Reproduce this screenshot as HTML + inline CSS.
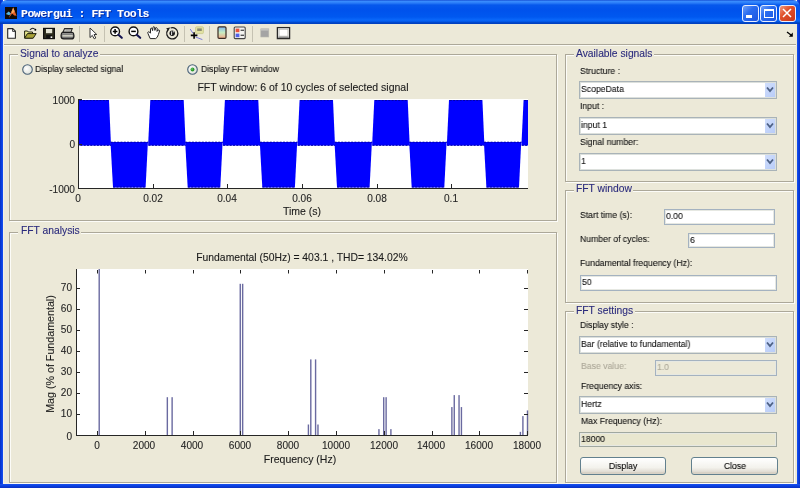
<!DOCTYPE html><html><head><meta charset="utf-8"><style>
*{margin:0;padding:0}
html,body{width:800px;height:488px;overflow:hidden;background:#fff;}
body{position:relative;font-family:"Liberation Sans",sans-serif;}
.t{position:absolute;white-space:nowrap;line-height:1;will-change:transform;-webkit-text-stroke:0.1px currentColor;}
</style></head><body>
<div style="position:absolute;left:0px;top:0px;width:800px;height:488px;background:#ECE9D8;border-radius:7px 7px 0 0;"></div>
<div style="position:absolute;left:0px;top:0px;width:3px;height:488px;background:linear-gradient(to right,#0A2FC0,#0840E0 50%,#1A50F0);"></div>
<div style="position:absolute;left:3px;top:24px;width:1px;height:460px;background:#F2F0E6;"></div>
<div style="position:absolute;left:797px;top:0px;width:3px;height:488px;background:linear-gradient(to left,#0A2FC0,#0840E0 50%,#1A50F0);"></div>
<div style="position:absolute;left:0px;top:484px;width:800px;height:4px;background:linear-gradient(to top,#0A2FC0,#0840E0 50%,#1A50F0);"></div>
<div style="position:absolute;left:3px;top:483px;width:794px;height:1px;background:#F2F0E6;"></div>
<div style="position:absolute;left:0px;top:0px;width:800px;height:24px;border-radius:7px 7px 0 0;background:linear-gradient(to bottom,#0A3CC8 0px,#3D90FF 1px,#2A7CF8 3px,#0658EC 5px,#0052EC 10px,#0058F0 17px,#0A68FA 20px,#0052E0 22px,#003CB8 23px,#003CB8 24px);"></div>
<div style="position:absolute;left:4px;top:23px;width:792px;height:1px;background:#0040C0;"></div>
<div class="t" style="left:21.00px;top:7.86px;font-size:11.5px;color:#fff;font-weight:bold;font-family:'Liberation Mono',monospace;letter-spacing:-0.5px;text-shadow:1px 1px 0 #0A2A9C;">Powergui : FFT Tools</div>
<svg style="position:absolute;left:5px;top:7px" width="12" height="12" viewBox="0 0 12 12">
<rect width="12" height="12" fill="#120C08"/>
<path d="M0.8 7 L3.6 4.6 L6.2 6.4 L4.2 8.2 Z" fill="#58B4DC"/>
<path d="M3.8 11 L8.2 0.6 L11.6 8.8 L9.2 8.6 L7.2 6.4 Z" fill="#E4602A"/>
<path d="M8.2 0.6 L9.6 4.2 L7.6 6.6 L6.4 5.2 Z" fill="#F6A860"/>
</svg>
<div style="position:absolute;left:742px;top:5px;width:17px;height:17px;background:linear-gradient(135deg,#6FA0F8,#2A6CF0 40%,#1D55E0);border:1px solid #E8EEFF;border-radius:3px;box-sizing:border-box;"></div>
<div style="position:absolute;left:746px;top:15px;width:6px;height:3px;background:#fff;"></div>
<div style="position:absolute;left:760px;top:5px;width:17px;height:17px;background:linear-gradient(135deg,#6FA0F8,#2A6CF0 40%,#1D55E0);border:1px solid #E8EEFF;border-radius:3px;box-sizing:border-box;"></div>
<div style="position:absolute;left:763.5px;top:8.5px;width:10px;height:9.5px;border:1px solid #fff;border-top-width:2.5px;box-sizing:border-box;"></div>
<div style="position:absolute;left:779px;top:5px;width:17px;height:17px;background:linear-gradient(135deg,#F09A80,#E0502A 40%,#C8361A);border:1px solid #E8EEFF;border-radius:3px;box-sizing:border-box;"></div>
<svg style="position:absolute;left:779px;top:5px" width="17" height="17"><path d="M4 4 L12 12 M12 4 L4 12" stroke="#fff" stroke-width="1.5"/></svg>
<div style="position:absolute;left:4px;top:44px;width:792px;height:1px;background:#ACA899;"></div>
<div style="position:absolute;left:4px;top:45px;width:792px;height:1px;background:#FAFAF4;"></div>
<svg style="position:absolute;left:0;top:24px" width="300" height="20" viewBox="0 24 300 20">
<defs><linearGradient id="cb" x1="0" y1="0" x2="0" y2="1"><stop offset="0" stop-color="#7FB8F0"/><stop offset="0.5" stop-color="#C8ECC0"/><stop offset="1" stop-color="#F4A888"/></linearGradient></defs>
<!-- new -->
<path d="M7.7 28.6 H12.8 L15.4 31.2 V38.2 H7.7 Z" fill="#fff" stroke="#262626" stroke-width="1.1" stroke-linejoin="round"/>
<path d="M12.6 28.8 V31.4 H15.2" fill="none" stroke="#262626" stroke-width="0.9"/>
<!-- open -->
<path d="M24.6 31 H27.5 L28.3 32 H32.5 V38 H24.6 Z" fill="#ECEC90" stroke="#202010" stroke-width="1"/>
<path d="M24.6 38.2 L27.4 33.6 H36.2 L33.2 38.2 Z" fill="#A8A238" stroke="#202010" stroke-width="1"/>
<path d="M30 30 Q32 27.2 34.5 28.8" fill="none" stroke="#222" stroke-width="1.1"/>
<circle cx="35.3" cy="29.8" r="1" fill="#000"/>
<!-- save -->
<rect x="43.6" y="28.4" width="10.8" height="10.2" fill="#2E2E1E" stroke="#111" stroke-width="1.2"/>
<rect x="46" y="29" width="6.2" height="4.2" fill="#E4E4D4"/>
<rect x="46.2" y="35" width="5.5" height="3" fill="#111"/>
<rect x="50.6" y="36.4" width="1.6" height="1.6" fill="#fff"/>
<!-- print -->
<path d="M64.6 28.6 H72.2 L70.8 32.4 H62.8 Z" fill="#D8D8D0" stroke="#2A2A2A" stroke-width="1.1"/>
<path d="M65.5 30 H70.5" stroke="#777" stroke-width="0.8"/>
<path d="M62.6 32.4 H72 Q73.9 32.8 73.9 35.2 V36.6 Q73.7 38.9 71.4 38.9 H63.8 Q61.1 38.9 61.1 36.6 V35 Q61.3 32.8 62.6 32.4 Z" fill="#707070" stroke="#1E1E1E" stroke-width="1.2"/>
<rect x="62.4" y="35.1" width="10.4" height="1.5" fill="#D8D8C8"/>
<rect x="62.4" y="33.2" width="10.4" height="1.2" fill="#9A9A96"/>
<!-- separators -->
<rect x="79" y="26" width="1" height="16" fill="#C5C2B2"/>
<rect x="104" y="26" width="1" height="16" fill="#C5C2B2"/>
<rect x="184" y="26" width="1" height="16" fill="#C5C2B2"/>
<rect x="209" y="26" width="1" height="16" fill="#C5C2B2"/>
<rect x="252" y="26" width="1" height="16" fill="#C5C2B2"/>
<!-- arrow -->
<path d="M90 28 V37.6 L92.3 35.4 L94.2 38.8 L95.8 38 L94 34.6 L96.8 34.5 Z" fill="#fff" stroke="#333" stroke-width="1" stroke-linejoin="round"/>
<!-- zoom in -->
<circle cx="115.1" cy="31.4" r="4.4" fill="#fff" stroke="#111" stroke-width="1.4"/>
<path d="M112.8 31.4 H117.4 M115.1 29.1 V33.7" stroke="#000" stroke-width="1.5"/>
<path d="M118.4 34.8 L121.8 37.8" stroke="#141450" stroke-width="2.1" stroke-linecap="round"/>
<!-- zoom out -->
<circle cx="133.5" cy="31.4" r="4.4" fill="#fff" stroke="#111" stroke-width="1.4"/>
<path d="M131.2 31.4 H135.8" stroke="#000" stroke-width="1.5"/>
<path d="M136.8 34.8 L140.2 37.8" stroke="#141450" stroke-width="2.1" stroke-linecap="round"/>
<!-- hand -->
<path d="M150.2 38.6 L148 33.6 Q147.2 32 148.6 31.8 Q149.6 31.8 150.4 33.2 L150.6 28.8 Q151 27.6 152 28.2 L152.6 30.6 L153 27.2 Q153.8 26.2 154.6 27.2 L154.9 30.4 L155.6 27.8 Q156.6 27.2 157.2 28.2 L157 31.4 L158 30 Q159.4 29.6 159.6 30.8 L158.4 34.6 Q157.4 38 155.6 38.6 Z" fill="#fff" stroke="#222" stroke-width="1"/>
<!-- rotate -->
<path d="M167.8 30 A5.6 5.6 0 1 0 170.6 28" fill="none" stroke="#1a1a1a" stroke-width="1.3"/>
<path d="M166.2 28.2 L170.2 27.4 L168.2 31 Z" fill="#1a1a1a"/>
<circle cx="172.2" cy="33.2" r="2.7" fill="#1a1a1a"/>
<path d="M171.6 31.4 V35 M172.8 31.8 H174" stroke="#fff" stroke-width="0.9"/>
<!-- data cursor -->
<rect x="195.6" y="26.8" width="7.8" height="6.8" rx="1" fill="#E2E2A4" stroke="#C8C888" stroke-width="0.8"/>
<rect x="197.2" y="28.4" width="4.6" height="2.6" fill="#8A8A70"/>
<path d="M190.2 29 L193 33.4 M195.6 37 L202.4 39.6" fill="none" stroke="#7A7ADA" stroke-width="1"/>
<path d="M190.8 35.4 H197.4 M194.1 32.2 V38.8" stroke="#000" stroke-width="1.6"/>
<!-- colorbar -->
<rect x="218" y="26.8" width="8" height="11.6" rx="1.2" fill="url(#cb)" stroke="#3A2A22" stroke-width="1.2"/>
<!-- legend -->
<rect x="234.2" y="27" width="11" height="11.6" rx="1" fill="#F4F4F0" stroke="#444" stroke-width="1.1"/>
<rect x="235.6" y="28.6" width="3.8" height="3.6" fill="#E8503C"/>
<rect x="235.6" y="33.6" width="3.8" height="3.6" fill="#5060E8"/>
<rect x="240.6" y="29.6" width="3.4" height="1.4" fill="#555"/>
<rect x="240.6" y="34.6" width="3.4" height="1.4" fill="#555"/>
<!-- gray square -->
<rect x="260.8" y="28.8" width="8" height="8.2" fill="#A4A4A4" stroke="#B8B8B0" stroke-width="0.6"/>
<rect x="261" y="29" width="7.6" height="1.6" fill="#C4C4C0"/>
<!-- window -->
<rect x="277.4" y="27.6" width="12.2" height="11" fill="#fff" stroke="#2A2A2A" stroke-width="1.3"/>
<rect x="279" y="29.2" width="9" height="7" fill="#fff" stroke="#B0B0A8" stroke-width="0.8"/>
<rect x="278.2" y="36.6" width="10.6" height="1.4" fill="#888"/>
</svg>
<svg style="position:absolute;left:786px;top:31px" width="8" height="6"><path d="M1 1 L5 4" stroke="#000" stroke-width="1.3"/><path d="M6.8 1.5 L6.8 5.8 L2.8 5.8 Z" fill="#000"/></svg>
<div style="position:absolute;left:10px;top:55px;width:548px;height:167px;border:1px solid #FCFCF8;box-sizing:border-box;"></div>
<div style="position:absolute;left:9px;top:54px;width:548px;height:167px;border:1px solid #ACA899;box-sizing:border-box;"></div>
<div style="position:absolute;left:17.7px;top:48px;width:82.4453125px;height:10px;background:#ECE9D8;"></div>
<div class="t" style="left:20.20px;top:48.88px;font-size:10.3px;color:#2A2A7C;font-weight:normal;font-family:'Liberation Sans',sans-serif;">Signal to analyze</div>
<div style="position:absolute;left:10px;top:233px;width:548px;height:251px;border:1px solid #FCFCF8;box-sizing:border-box;"></div>
<div style="position:absolute;left:9px;top:232px;width:548px;height:251px;border:1px solid #ACA899;box-sizing:border-box;"></div>
<div style="position:absolute;left:18.0px;top:226px;width:62.7640625px;height:10px;background:#ECE9D8;"></div>
<div class="t" style="left:20.50px;top:226.38px;font-size:10.3px;color:#2A2A7C;font-weight:normal;font-family:'Liberation Sans',sans-serif;">FFT analysis</div>
<svg style="position:absolute;left:21.7px;top:64.2px" width="11" height="11"><defs><radialGradient id="rg21" cx="0.4" cy="0.4" r="0.7"><stop offset="0" stop-color="#fff"/><stop offset="1" stop-color="#D8DCD4"/></radialGradient></defs><circle cx="5.5" cy="5.5" r="4.8" fill="url(#rg21)" stroke="#4A6278" stroke-width="1.1"/></svg>
<div class="t" style="left:34.70px;top:63.64px;font-size:9.4px;color:#111;font-weight:normal;font-family:'Liberation Sans',sans-serif;transform:scaleX(0.925);transform-origin:0 0;">Display selected signal</div>
<svg style="position:absolute;left:187px;top:64px" width="11" height="11"><defs><radialGradient id="rg187" cx="0.4" cy="0.4" r="0.7"><stop offset="0" stop-color="#fff"/><stop offset="1" stop-color="#D8DCD4"/></radialGradient></defs><circle cx="5.5" cy="5.5" r="4.8" fill="url(#rg187)" stroke="#4A6278" stroke-width="1.1"/><circle cx="5.5" cy="5.5" r="2" fill="#2E9A2E"/><circle cx="5" cy="5" r="0.8" fill="#7ED87E"/></svg>
<div class="t" style="left:200.50px;top:63.64px;font-size:9.4px;color:#111;font-weight:normal;font-family:'Liberation Sans',sans-serif;transform:scaleX(0.925);transform-origin:0 0;">Display FFT window</div>
<div style="position:absolute;left:78px;top:99px;width:450px;height:89px;background:#fff;"></div>
<svg style="position:absolute;left:0;top:0" width="800" height="488">
<defs><clipPath id="c1"><rect x="78" y="99" width="450" height="89"/></clipPath></defs><g clip-path="url(#c1)">
<path d="M-1.3 145.5 L0.9 100 L34.3 100 L36.3 145.5 Z" fill="#0000FF"/>
<path d="M35.8 142 L38.3 187.6 L70.9 187.6 L73.2 142 Z" fill="#0000FF"/>
<path d="M1.7 100.5 H34.1 M-0.9 145.3 H36.3" stroke="#0000A8" stroke-width="1" stroke-dasharray="2 1.3"/>
<path d="M35.9 142.2 H73.7 M38.5 187 H71.1" stroke="#0000A8" stroke-width="1" stroke-dasharray="2 1.3"/>
<path d="M73.4 145.5 L75.6 100 L109.0 100 L111.0 145.5 Z" fill="#0000FF"/>
<path d="M110.5 142 L113.0 187.6 L145.6 187.6 L147.9 142 Z" fill="#0000FF"/>
<path d="M76.4 100.5 H108.8 M73.8 145.3 H111.0" stroke="#0000A8" stroke-width="1" stroke-dasharray="2 1.3"/>
<path d="M110.6 142.2 H148.4 M113.2 187 H145.8" stroke="#0000A8" stroke-width="1" stroke-dasharray="2 1.3"/>
<path d="M148.1 145.5 L150.3 100 L183.7 100 L185.7 145.5 Z" fill="#0000FF"/>
<path d="M185.2 142 L187.7 187.6 L220.3 187.6 L222.6 142 Z" fill="#0000FF"/>
<path d="M151.1 100.5 H183.5 M148.5 145.3 H185.7" stroke="#0000A8" stroke-width="1" stroke-dasharray="2 1.3"/>
<path d="M185.3 142.2 H223.1 M187.9 187 H220.5" stroke="#0000A8" stroke-width="1" stroke-dasharray="2 1.3"/>
<path d="M222.7 145.5 L224.9 100 L258.3 100 L260.3 145.5 Z" fill="#0000FF"/>
<path d="M259.8 142 L262.3 187.6 L294.9 187.6 L297.2 142 Z" fill="#0000FF"/>
<path d="M225.7 100.5 H258.1 M223.1 145.3 H260.3" stroke="#0000A8" stroke-width="1" stroke-dasharray="2 1.3"/>
<path d="M259.9 142.2 H297.7 M262.5 187 H295.1" stroke="#0000A8" stroke-width="1" stroke-dasharray="2 1.3"/>
<path d="M297.4 145.5 L299.6 100 L333.0 100 L335.0 145.5 Z" fill="#0000FF"/>
<path d="M334.5 142 L337.0 187.6 L369.6 187.6 L371.9 142 Z" fill="#0000FF"/>
<path d="M300.4 100.5 H332.8 M297.8 145.3 H335.0" stroke="#0000A8" stroke-width="1" stroke-dasharray="2 1.3"/>
<path d="M334.6 142.2 H372.4 M337.2 187 H369.8" stroke="#0000A8" stroke-width="1" stroke-dasharray="2 1.3"/>
<path d="M372.1 145.5 L374.3 100 L407.7 100 L409.7 145.5 Z" fill="#0000FF"/>
<path d="M409.2 142 L411.7 187.6 L444.3 187.6 L446.6 142 Z" fill="#0000FF"/>
<path d="M375.1 100.5 H407.5 M372.5 145.3 H409.7" stroke="#0000A8" stroke-width="1" stroke-dasharray="2 1.3"/>
<path d="M409.3 142.2 H447.1 M411.9 187 H444.5" stroke="#0000A8" stroke-width="1" stroke-dasharray="2 1.3"/>
<path d="M446.8 145.5 L449.0 100 L482.4 100 L484.4 145.5 Z" fill="#0000FF"/>
<path d="M483.9 142 L486.4 187.6 L519.0 187.6 L521.2 142 Z" fill="#0000FF"/>
<path d="M449.8 100.5 H482.2 M447.2 145.3 H484.4" stroke="#0000A8" stroke-width="1" stroke-dasharray="2 1.3"/>
<path d="M484.0 142.2 H521.8 M486.6 187 H519.1" stroke="#0000A8" stroke-width="1" stroke-dasharray="2 1.3"/>
<path d="M521.4 145.5 L523.6 100 L557.0 100 L559.0 145.5 Z" fill="#0000FF"/>
<path d="M558.5 142 L561.0 187.6 L593.6 187.6 L595.9 142 Z" fill="#0000FF"/>
<path d="M524.4 100.5 H556.8 M521.8 145.3 H559.0" stroke="#0000A8" stroke-width="1" stroke-dasharray="2 1.3"/>
<path d="M558.6 142.2 H596.4 M561.2 187 H593.8" stroke="#0000A8" stroke-width="1" stroke-dasharray="2 1.3"/>
<path d="M596.1 145.5 L598.3 100 L631.7 100 L633.7 145.5 Z" fill="#0000FF"/>
<path d="M633.2 142 L635.7 187.6 L668.3 187.6 L670.6 142 Z" fill="#0000FF"/>
<path d="M599.1 100.5 H631.5 M596.5 145.3 H633.7" stroke="#0000A8" stroke-width="1" stroke-dasharray="2 1.3"/>
<path d="M633.3 142.2 H671.1 M635.9 187 H668.5" stroke="#0000A8" stroke-width="1" stroke-dasharray="2 1.3"/>
</g>
<path d="M78.5 99 V188.5 H528" fill="none" stroke="#262626" stroke-width="1"/>
<path d="M78.5 188 v-4" stroke="#262626" stroke-width="1"/>
<path d="M153.5 188 v-4" stroke="#262626" stroke-width="1"/>
<path d="M227.5 188 v-4" stroke="#262626" stroke-width="1"/>
<path d="M302.5 188 v-4" stroke="#262626" stroke-width="1"/>
<path d="M377.5 188 v-4" stroke="#262626" stroke-width="1"/>
<path d="M451.5 188 v-4" stroke="#262626" stroke-width="1"/>
<path d="M78 99.5 h4" stroke="#262626" stroke-width="1"/>
<path d="M78 144.5 h4" stroke="#262626" stroke-width="1"/>
<path d="M78 188.5 h4" stroke="#262626" stroke-width="1"/>
</svg>
<div class="t" style="left:-225.00px;width:300px;text-align:right;top:96.05px;font-size:10.1px;color:#262626;">1000</div>
<div class="t" style="left:-225.00px;width:300px;text-align:right;top:140.05px;font-size:10.1px;color:#262626;">0</div>
<div class="t" style="left:-225.00px;width:300px;text-align:right;top:185.05px;font-size:10.1px;color:#262626;">-1000</div>
<div class="t" style="left:-221.80px;width:600px;text-align:center;top:193.65px;font-size:10.1px;color:#262626;">0</div>
<div class="t" style="left:-146.80px;width:600px;text-align:center;top:193.65px;font-size:10.1px;color:#262626;">0.02</div>
<div class="t" style="left:-72.80px;width:600px;text-align:center;top:193.65px;font-size:10.1px;color:#262626;">0.04</div>
<div class="t" style="left:2.20px;width:600px;text-align:center;top:193.65px;font-size:10.1px;color:#262626;">0.06</div>
<div class="t" style="left:77.20px;width:600px;text-align:center;top:193.65px;font-size:10.1px;color:#262626;">0.08</div>
<div class="t" style="left:151.20px;width:600px;text-align:center;top:193.65px;font-size:10.1px;color:#262626;">0.1</div>
<div class="t" style="left:3.00px;width:600px;text-align:center;top:82.31px;font-size:10.5px;color:#1a1a1a;">FFT window: 6 of 10 cycles of selected signal</div>
<div class="t" style="left:1.50px;width:600px;text-align:center;top:206.11px;font-size:10.5px;color:#1a1a1a;">Time (s)</div>
<div style="position:absolute;left:76px;top:269px;width:452px;height:166px;background:#fff;"></div>
<svg style="position:absolute;left:0;top:0" width="800" height="488">
<rect x="98.50" y="269.00" width="1.4" height="166.00" fill="#6A6AA0"/>
<rect x="166.64" y="397.20" width="1.4" height="37.80" fill="#6A6AA0"/>
<rect x="171.42" y="397.20" width="1.4" height="37.80" fill="#6A6AA0"/>
<rect x="239.56" y="283.80" width="1.4" height="151.20" fill="#6A6AA0"/>
<rect x="241.96" y="283.80" width="1.4" height="151.20" fill="#6A6AA0"/>
<rect x="307.71" y="424.50" width="1.4" height="10.50" fill="#6A6AA0"/>
<rect x="310.10" y="359.40" width="1.4" height="75.60" fill="#6A6AA0"/>
<rect x="314.88" y="359.40" width="1.4" height="75.60" fill="#6A6AA0"/>
<rect x="317.27" y="424.50" width="1.4" height="10.50" fill="#6A6AA0"/>
<rect x="378.24" y="429.12" width="1.4" height="5.88" fill="#6A6AA0"/>
<rect x="383.02" y="397.20" width="1.4" height="37.80" fill="#6A6AA0"/>
<rect x="385.42" y="397.20" width="1.4" height="37.80" fill="#6A6AA0"/>
<rect x="390.20" y="429.12" width="1.4" height="5.88" fill="#6A6AA0"/>
<rect x="451.17" y="407.07" width="1.4" height="27.93" fill="#6A6AA0"/>
<rect x="453.56" y="395.10" width="1.4" height="39.90" fill="#6A6AA0"/>
<rect x="458.34" y="395.10" width="1.4" height="39.90" fill="#6A6AA0"/>
<rect x="460.73" y="407.07" width="1.4" height="27.93" fill="#6A6AA0"/>
<rect x="519.69" y="431.85" width="1.4" height="3.15" fill="#6A6AA0"/>
<rect x="522.20" y="416.10" width="1.4" height="18.90" fill="#6A6AA0"/>
<rect x="526.80" y="410.43" width="1.4" height="24.57" fill="#6A6AA0"/>
<path d="M76.5 269 V435.5 H528" fill="none" stroke="#262626" stroke-width="1"/>
<path d="M97.5 435 v-4 M97.5 270 v3.5" stroke="#262626" stroke-width="1"/>
<path d="M145.5 435 v-4 M145.5 270 v3.5" stroke="#262626" stroke-width="1"/>
<path d="M193.5 435 v-4 M193.5 270 v3.5" stroke="#262626" stroke-width="1"/>
<path d="M240.5 435 v-4 M240.5 270 v3.5" stroke="#262626" stroke-width="1"/>
<path d="M288.5 435 v-4 M288.5 270 v3.5" stroke="#262626" stroke-width="1"/>
<path d="M336.5 435 v-4 M336.5 270 v3.5" stroke="#262626" stroke-width="1"/>
<path d="M384.5 435 v-4 M384.5 270 v3.5" stroke="#262626" stroke-width="1"/>
<path d="M432.5 435 v-4 M432.5 270 v3.5" stroke="#262626" stroke-width="1"/>
<path d="M479.5 435 v-4 M479.5 270 v3.5" stroke="#262626" stroke-width="1"/>
<path d="M527.5 435 v-4 M527.5 270 v3.5" stroke="#262626" stroke-width="1"/>
<path d="M76 435.5 h4 M528 435.5 h-4" stroke="#262626" stroke-width="1"/>
<path d="M76 414.5 h4 M528 414.5 h-4" stroke="#262626" stroke-width="1"/>
<path d="M76 393.5 h4 M528 393.5 h-4" stroke="#262626" stroke-width="1"/>
<path d="M76 372.5 h4 M528 372.5 h-4" stroke="#262626" stroke-width="1"/>
<path d="M76 351.5 h4 M528 351.5 h-4" stroke="#262626" stroke-width="1"/>
<path d="M76 330.5 h4 M528 330.5 h-4" stroke="#262626" stroke-width="1"/>
<path d="M76 309.5 h4 M528 309.5 h-4" stroke="#262626" stroke-width="1"/>
<path d="M76 288.5 h4 M528 288.5 h-4" stroke="#262626" stroke-width="1"/>
</svg>
<div class="t" style="left:-228.00px;width:300px;text-align:right;top:431.55px;font-size:10.1px;color:#262626;">0</div>
<div class="t" style="left:-228.00px;width:300px;text-align:right;top:409.05px;font-size:10.1px;color:#262626;">10</div>
<div class="t" style="left:-228.00px;width:300px;text-align:right;top:388.05px;font-size:10.1px;color:#262626;">20</div>
<div class="t" style="left:-228.00px;width:300px;text-align:right;top:367.05px;font-size:10.1px;color:#262626;">30</div>
<div class="t" style="left:-228.00px;width:300px;text-align:right;top:346.05px;font-size:10.1px;color:#262626;">40</div>
<div class="t" style="left:-228.00px;width:300px;text-align:right;top:325.05px;font-size:10.1px;color:#262626;">50</div>
<div class="t" style="left:-228.00px;width:300px;text-align:right;top:304.05px;font-size:10.1px;color:#262626;">60</div>
<div class="t" style="left:-228.00px;width:300px;text-align:right;top:283.05px;font-size:10.1px;color:#262626;">70</div>
<div class="t" style="left:-203.40px;width:600px;text-align:center;top:441.25px;font-size:10.1px;color:#262626;">0</div>
<div class="t" style="left:-155.58px;width:600px;text-align:center;top:441.25px;font-size:10.1px;color:#262626;">2000</div>
<div class="t" style="left:-107.76px;width:600px;text-align:center;top:441.25px;font-size:10.1px;color:#262626;">4000</div>
<div class="t" style="left:-59.94px;width:600px;text-align:center;top:441.25px;font-size:10.1px;color:#262626;">6000</div>
<div class="t" style="left:-12.12px;width:600px;text-align:center;top:441.25px;font-size:10.1px;color:#262626;">8000</div>
<div class="t" style="left:35.70px;width:600px;text-align:center;top:441.25px;font-size:10.1px;color:#262626;">10000</div>
<div class="t" style="left:83.52px;width:600px;text-align:center;top:441.25px;font-size:10.1px;color:#262626;">12000</div>
<div class="t" style="left:131.34px;width:600px;text-align:center;top:441.25px;font-size:10.1px;color:#262626;">14000</div>
<div class="t" style="left:179.16px;width:600px;text-align:center;top:441.25px;font-size:10.1px;color:#262626;">16000</div>
<div class="t" style="left:226.98px;width:600px;text-align:center;top:441.25px;font-size:10.1px;color:#262626;">18000</div>
<div class="t" style="left:1.80px;width:600px;text-align:center;top:252.73px;font-size:10.35px;color:#1a1a1a;">Fundamental (50Hz) = 403.1 , THD= 134.02%</div>
<div class="t" style="left:0.00px;width:600px;text-align:center;top:454.11px;font-size:10.5px;color:#1a1a1a;">Frequency (Hz)</div>
<div class="t" style="left:-250px;width:600px;text-align:center;top:348.5px;font-size:10.7px;color:#1a1a1a;transform:rotate(-90deg);transform-origin:300px 5px;">Mag (% of Fundamental)</div>
<div style="position:absolute;left:566px;top:55px;width:229px;height:128px;border:1px solid #FCFCF8;box-sizing:border-box;"></div>
<div style="position:absolute;left:565px;top:54px;width:229px;height:128px;border:1px solid #ACA899;box-sizing:border-box;"></div>
<div style="position:absolute;left:573.5px;top:48px;width:80.5375px;height:10px;background:#ECE9D8;"></div>
<div class="t" style="left:576.00px;top:49.18px;font-size:10.3px;color:#2A2A7C;font-weight:normal;font-family:'Liberation Sans',sans-serif;">Available signals</div>
<div style="position:absolute;left:566px;top:191px;width:229px;height:113px;border:1px solid #FCFCF8;box-sizing:border-box;"></div>
<div style="position:absolute;left:565px;top:190px;width:229px;height:113px;border:1px solid #ACA899;box-sizing:border-box;"></div>
<div style="position:absolute;left:573.5px;top:184px;width:59.903125px;height:10px;background:#ECE9D8;"></div>
<div class="t" style="left:576.00px;top:183.78px;font-size:10.3px;color:#2A2A7C;font-weight:normal;font-family:'Liberation Sans',sans-serif;">FFT window</div>
<div style="position:absolute;left:566px;top:312px;width:229px;height:172px;border:1px solid #FCFCF8;box-sizing:border-box;"></div>
<div style="position:absolute;left:565px;top:311px;width:229px;height:172px;border:1px solid #ACA899;box-sizing:border-box;"></div>
<div style="position:absolute;left:573.5px;top:305px;width:61.046875px;height:10px;background:#ECE9D8;"></div>
<div class="t" style="left:576.00px;top:305.68px;font-size:10.3px;color:#2A2A7C;font-weight:normal;font-family:'Liberation Sans',sans-serif;">FFT settings</div>
<div class="t" style="left:579.80px;top:65.79px;font-size:9.4px;color:#111;font-weight:normal;font-family:'Liberation Sans',sans-serif;transform:scaleX(0.925);transform-origin:0 0;">Structure :</div>
<div style="position:absolute;left:579px;top:81px;width:198px;height:18px;background:#fff;border:1px solid #A9B3B8;box-shadow:inset 0 0 0 1px #DCE0DC;box-sizing:border-box;"></div>
<div style="position:absolute;left:765px;top:83px;width:10px;height:14px;background:linear-gradient(135deg,#D0DEFC,#B8CCF8);"></div>
<svg style="position:absolute;left:765px;top:83px" width="10" height="14"><path d="M2 4.5 L5 8.0 L8 4.5" fill="none" stroke="#4D6185" stroke-width="1.8"/></svg>
<div class="t" style="left:581.00px;top:84.44px;font-size:9.4px;color:#111;font-weight:normal;font-family:'Liberation Sans',sans-serif;transform:scaleX(0.925);transform-origin:0 0;">ScopeData</div>
<div class="t" style="left:580.00px;top:100.74px;font-size:9.4px;color:#111;font-weight:normal;font-family:'Liberation Sans',sans-serif;transform:scaleX(0.925);transform-origin:0 0;">Input :</div>
<div style="position:absolute;left:579px;top:117px;width:198px;height:18px;background:#fff;border:1px solid #A9B3B8;box-shadow:inset 0 0 0 1px #DCE0DC;box-sizing:border-box;"></div>
<div style="position:absolute;left:765px;top:119px;width:10px;height:14px;background:linear-gradient(135deg,#D0DEFC,#B8CCF8);"></div>
<svg style="position:absolute;left:765px;top:119px" width="10" height="14"><path d="M2 4.5 L5 8.0 L8 4.5" fill="none" stroke="#4D6185" stroke-width="1.8"/></svg>
<div class="t" style="left:581.00px;top:120.44px;font-size:9.4px;color:#111;font-weight:normal;font-family:'Liberation Sans',sans-serif;transform:scaleX(0.925);transform-origin:0 0;">input 1</div>
<div class="t" style="left:580.00px;top:137.04px;font-size:9.4px;color:#111;font-weight:normal;font-family:'Liberation Sans',sans-serif;transform:scaleX(0.925);transform-origin:0 0;">Signal number:</div>
<div style="position:absolute;left:579px;top:153px;width:198px;height:18px;background:#fff;border:1px solid #A9B3B8;box-shadow:inset 0 0 0 1px #DCE0DC;box-sizing:border-box;"></div>
<div style="position:absolute;left:765px;top:155px;width:10px;height:14px;background:linear-gradient(135deg,#D0DEFC,#B8CCF8);"></div>
<svg style="position:absolute;left:765px;top:155px" width="10" height="14"><path d="M2 4.5 L5 8.0 L8 4.5" fill="none" stroke="#4D6185" stroke-width="1.8"/></svg>
<div class="t" style="left:581.00px;top:156.44px;font-size:9.4px;color:#111;font-weight:normal;font-family:'Liberation Sans',sans-serif;transform:scaleX(0.925);transform-origin:0 0;">1</div>
<div class="t" style="left:579.70px;top:210.44px;font-size:9.4px;color:#111;font-weight:normal;font-family:'Liberation Sans',sans-serif;transform:scaleX(0.925);transform-origin:0 0;">Start time (s):</div>
<div style="position:absolute;left:664px;top:209px;width:111px;height:16px;background:#fff;border:1px solid #A4B2C0;box-shadow:inset 0 0 0 1px #E6E8E2;box-sizing:border-box;"></div>
<div class="t" style="left:666.00px;top:211.24px;font-size:9.4px;color:#111;font-weight:normal;font-family:'Liberation Sans',sans-serif;transform:scaleX(0.925);transform-origin:0 0;">0.00</div>
<div class="t" style="left:579.70px;top:233.54px;font-size:9.4px;color:#111;font-weight:normal;font-family:'Liberation Sans',sans-serif;transform:scaleX(0.925);transform-origin:0 0;">Number of cycles:</div>
<div style="position:absolute;left:688px;top:233px;width:87px;height:15px;background:#fff;border:1px solid #A4B2C0;box-shadow:inset 0 0 0 1px #E6E8E2;box-sizing:border-box;"></div>
<div class="t" style="left:690.00px;top:235.24px;font-size:9.4px;color:#111;font-weight:normal;font-family:'Liberation Sans',sans-serif;transform:scaleX(0.925);transform-origin:0 0;">6</div>
<div class="t" style="left:579.90px;top:257.64px;font-size:9.4px;color:#111;font-weight:normal;font-family:'Liberation Sans',sans-serif;transform:scaleX(0.925);transform-origin:0 0;">Fundamental frequency (Hz):</div>
<div style="position:absolute;left:580px;top:275px;width:197px;height:16px;background:#fff;border:1px solid #A4B2C0;box-shadow:inset 0 0 0 1px #E6E8E2;box-sizing:border-box;"></div>
<div class="t" style="left:582.00px;top:277.24px;font-size:9.4px;color:#111;font-weight:normal;font-family:'Liberation Sans',sans-serif;transform:scaleX(0.925);transform-origin:0 0;">50</div>
<div class="t" style="left:579.90px;top:319.54px;font-size:9.4px;color:#111;font-weight:normal;font-family:'Liberation Sans',sans-serif;transform:scaleX(0.925);transform-origin:0 0;">Display style :</div>
<div style="position:absolute;left:579px;top:336px;width:198px;height:18px;background:#fff;border:1px solid #A9B3B8;box-shadow:inset 0 0 0 1px #DCE0DC;box-sizing:border-box;"></div>
<div style="position:absolute;left:765px;top:338px;width:10px;height:14px;background:linear-gradient(135deg,#D0DEFC,#B8CCF8);"></div>
<svg style="position:absolute;left:765px;top:338px" width="10" height="14"><path d="M2 4.5 L5 8.0 L8 4.5" fill="none" stroke="#4D6185" stroke-width="1.8"/></svg>
<div class="t" style="left:581.00px;top:339.44px;font-size:9.4px;color:#111;font-weight:normal;font-family:'Liberation Sans',sans-serif;transform:scaleX(0.925);transform-origin:0 0;">Bar (relative to fundamental)</div>
<div class="t" style="left:581.20px;top:361.04px;font-size:9.4px;color:#ACA899;font-weight:normal;font-family:'Liberation Sans',sans-serif;transform:scaleX(0.925);transform-origin:0 0;">Base value:</div>
<div style="position:absolute;left:655px;top:360px;width:122px;height:16px;background:#ECE9D8;border:1px solid #A4B2C0;box-shadow:inset 0 0 0 1px #E6E8E2;box-sizing:border-box;"></div>
<div class="t" style="left:657.00px;top:362.24px;font-size:9.4px;color:#ACA899;font-weight:normal;font-family:'Liberation Sans',sans-serif;transform:scaleX(0.925);transform-origin:0 0;">1.0</div>
<div class="t" style="left:581.00px;top:381.04px;font-size:9.4px;color:#111;font-weight:normal;font-family:'Liberation Sans',sans-serif;transform:scaleX(0.925);transform-origin:0 0;">Frequency axis:</div>
<div style="position:absolute;left:579px;top:396px;width:198px;height:18px;background:#fff;border:1px solid #A9B3B8;box-shadow:inset 0 0 0 1px #DCE0DC;box-sizing:border-box;"></div>
<div style="position:absolute;left:765px;top:398px;width:10px;height:14px;background:linear-gradient(135deg,#D0DEFC,#B8CCF8);"></div>
<svg style="position:absolute;left:765px;top:398px" width="10" height="14"><path d="M2 4.5 L5 8.0 L8 4.5" fill="none" stroke="#4D6185" stroke-width="1.8"/></svg>
<div class="t" style="left:581.00px;top:399.44px;font-size:9.4px;color:#111;font-weight:normal;font-family:'Liberation Sans',sans-serif;transform:scaleX(0.925);transform-origin:0 0;">Hertz</div>
<div class="t" style="left:581.20px;top:416.44px;font-size:9.4px;color:#111;font-weight:normal;font-family:'Liberation Sans',sans-serif;transform:scaleX(0.925);transform-origin:0 0;">Max Frequency (Hz):</div>
<div style="position:absolute;left:579px;top:432px;width:198px;height:15px;background:#E9E7CF;border:1px solid #A0A8A0;box-shadow:inset 0 0 0 1px #E6E8E2;box-sizing:border-box;"></div>
<div class="t" style="left:581.00px;top:434.24px;font-size:9.4px;color:#111;font-weight:normal;font-family:'Liberation Sans',sans-serif;transform:scaleX(0.925);transform-origin:0 0;">18000</div>
<div style="position:absolute;left:580px;top:457px;width:86px;height:18px;border:1px solid #62808E;border-radius:3px;box-sizing:border-box;background:linear-gradient(to bottom,#FFFFFF,#F3F2EC 60%,#D6D0C5);box-shadow:inset 0 -2px 0 #D8D2C6;"></div>
<div class="t" style="left:323.00px;width:600px;text-align:center;top:461.04px;font-size:9.4px;color:#000;transform:scaleX(0.925);transform-origin:300px 0;">Display</div>
<div style="position:absolute;left:691px;top:457px;width:87px;height:18px;border:1px solid #62808E;border-radius:3px;box-sizing:border-box;background:linear-gradient(to bottom,#FFFFFF,#F3F2EC 60%,#D6D0C5);box-shadow:inset 0 -2px 0 #D8D2C6;"></div>
<div class="t" style="left:434.50px;width:600px;text-align:center;top:461.04px;font-size:9.4px;color:#000;transform:scaleX(0.925);transform-origin:300px 0;">Close</div>
</body></html>
